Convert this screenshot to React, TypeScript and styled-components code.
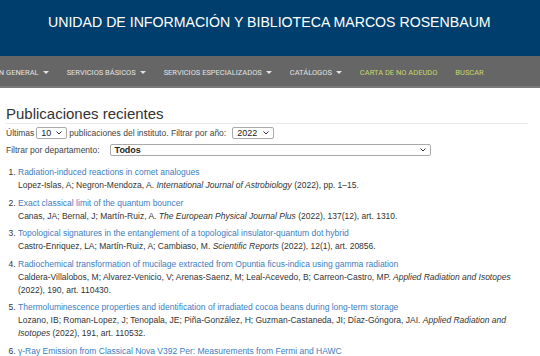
import React from 'react';
import styled, { createGlobalStyle } from 'styled-components';

interface Publication {
  title: string;
  authors: string;
  journal: string;
  rest: string;
}

const publications: Publication[] = [
  {
    title: 'Radiation-induced reactions in comet analogues',
    authors: 'Lopez-Islas, A; Negron-Mendoza, A.',
    journal: 'International Journal of Astrobiology',
    rest: '(2022), pp. 1–15.',
  },
  {
    title: 'Exact classical limit of the quantum bouncer',
    authors: 'Canas, JA; Bernal, J; Martín-Ruiz, A.',
    journal: 'The European Physical Journal Plus',
    rest: '(2022), 137(12), art. 1310.',
  },
  {
    title: 'Topological signatures in the entanglement of a topological insulator-quantum dot hybrid',
    authors: 'Castro-Enriquez, LA; Martín-Ruiz, A; Cambiaso, M.',
    journal: 'Scientific Reports',
    rest: '(2022), 12(1), art. 20856.',
  },
  {
    title: 'Radiochemical transformation of mucilage extracted from Opuntia ficus-indica using gamma radiation',
    authors: 'Caldera-Villalobos, M; Alvarez-Venicio, V; Arenas-Saenz, M; Leal-Acevedo, B; Carreon-Castro, MP.',
    journal: 'Applied Radiation and Isotopes',
    rest: '(2022), 190, art. 110430.',
  },
  {
    title: 'Thermoluminescence properties and identification of irradiated cocoa beans during long-term storage',
    authors: 'Lozano, IB; Roman-Lopez, J; Tenopala, JE; Piña-González, H; Guzman-Castaneda, JI; Díaz-Góngora, JAI.',
    journal: 'Applied Radiation and Isotopes',
    rest: '(2022), 191, art. 110532.',
  },
  {
    title: 'γ-Ray Emission from Classical Nova V392 Per: Measurements from Fermi and HAWC',
    authors: 'Albert, A; Alfaro, R; Alvarez, C; Angeles Camacho, JR.',
    journal: 'The Astrophysical Journal',
    rest: '(2022), 940(2), art. 141.',
  },
];

const navItems = [
  { label: 'INFORMACIÓN GENERAL', caret: true, accent: false },
  { label: 'SERVICIOS BÁSICOS', caret: true, accent: false },
  { label: 'SERVICIOS ESPECIALIZADOS', caret: true, accent: false },
  { label: 'CATÁLOGOS', caret: true, accent: false },
  { label: 'CARTA DE NO ADEUDO', caret: false, accent: true },
  { label: 'BUSCAR', caret: false, accent: true },
];

const GlobalStyle = createGlobalStyle`
  html, body {
    margin: 0;
    padding: 0;
    background: #fff;
    overflow: hidden;
  }
  body {
    font-family: "Liberation Sans", Arial, sans-serif;
    color: #333;
  }
`;

const Page = styled.div`
  width: 540px;
  height: 356px;
  overflow: hidden;
`;

const Banner = styled.header`
  height: 56px;
  box-sizing: border-box;
  background: #003f6d;
  padding: 14px 0 0 48px;
`;

const BannerTitle = styled.h1`
  margin: 0;
  color: #fff;
  font-family: "Liberation Sans", Arial, sans-serif;
  font-size: 14.15px;
  line-height: 16px;
  font-weight: 400;
  white-space: nowrap;
`;

const NavBar = styled.nav`
  height: 30px;
  background: #666;
  border-bottom: 2px solid #7a7a7a;
  display: flex;
  align-items: center;
  overflow: hidden;
  white-space: nowrap;
`;

const NavTrack = styled.div`
  display: flex;
  align-items: center;
  gap: 18px;
  margin-left: -46px;
  padding-top: 2px;
`;

const NavItem = styled.a<{ $accent: boolean }>`
  font-family: Roboto, "Liberation Sans", sans-serif;
  font-size: 7.5px;
  color: ${(p) => (p.$accent ? '#c6d86a' : '#e2e2e2')};
  text-decoration: none;
  display: flex;
  align-items: center;
  gap: 4px;
`;

const Caret = styled.span`
  width: 0;
  height: 0;
  border-left: 3px solid transparent;
  border-right: 3px solid transparent;
  border-top: 3px solid #e2e2e2;
`;

const Content = styled.main`
  padding: 0 12px 0 6px;
`;

const Heading = styled.h2`
  margin: 17px 0 0;
  padding-bottom: 1px;
  border-bottom: 1px solid #e8e8e8;
  font-size: 15px;
  line-height: 17px;
  font-weight: 400;
  color: #333;
`;

const FilterRow = styled.div<{ $top: number }>`
  display: flex;
  align-items: center;
  gap: 2px;
  font-size: 8.5px;
  color: #444;
  margin-top: ${(p) => p.$top}px;
  height: 14px;
`;

const SelectBox = styled.div<{ $width: number; $bold?: boolean; $offset?: number }>`
  width: ${(p) => p.$width}px;
  height: 12px;
  box-sizing: border-box;
  border: 1px solid #aaa;
  border-radius: 2px;
  background: #fff;
  display: flex;
  align-items: center;
  justify-content: space-between;
  padding: 0 4px;
  font-size: 9px;
  font-weight: ${(p) => (p.$bold ? 700 : 400)};
  color: #222;
  margin-left: ${(p) => p.$offset ?? 0}px;
`;

const Chevron = () => (
  <svg width="6" height="4" viewBox="0 0 6 4">
    <path d="M0.5 0.5 L3 3 L5.5 0.5" fill="none" stroke="#333" strokeWidth="1" />
  </svg>
);

const List = styled.ol`
  margin: 9px 0 0;
  padding-left: 12px;
  font-size: 8.5px;
  line-height: 13px;
  color: #333;
`;

const Item = styled.li`
  margin-bottom: 4.6px;
`;

const TitleLink = styled.a`
  color: #3c7ebf;
  text-decoration: none;
  display: block;
`;

const Journal = styled.i``;

export default function App() {
  return (
    <Page>
      <GlobalStyle />
      <Banner>
        <BannerTitle>UNIDAD DE INFORMACIÓN Y BIBLIOTECA MARCOS ROSENBAUM</BannerTitle>
      </Banner>
      <NavBar>
        <NavTrack>
          {navItems.map((item) => (
            <NavItem key={item.label} $accent={item.accent}>
              {item.label}
              {item.caret && <Caret />}
            </NavItem>
          ))}
        </NavTrack>
      </NavBar>
      <Content>
        <Heading>Publicaciones recientes</Heading>
        <FilterRow $top={2}>
          Últimas
          <SelectBox $width={31}>
            10 <Chevron />
          </SelectBox>
          publicaciones del instituto. Filtrar por año:
          <SelectBox $width={42} $offset={4}>
            2022 <Chevron />
          </SelectBox>
        </FilterRow>
        <FilterRow $top={3}>
          Filtrar por departamento:
          <SelectBox $width={321} $bold $offset={8}>
            Todos <Chevron />
          </SelectBox>
        </FilterRow>
        <List>
          {publications.map((pub) => (
            <Item key={pub.title}>
              <TitleLink href="#">{pub.title}</TitleLink>
              {pub.authors} <Journal>{pub.journal}</Journal> {pub.rest}
            </Item>
          ))}
        </List>
      </Content>
    </Page>
  );
}
